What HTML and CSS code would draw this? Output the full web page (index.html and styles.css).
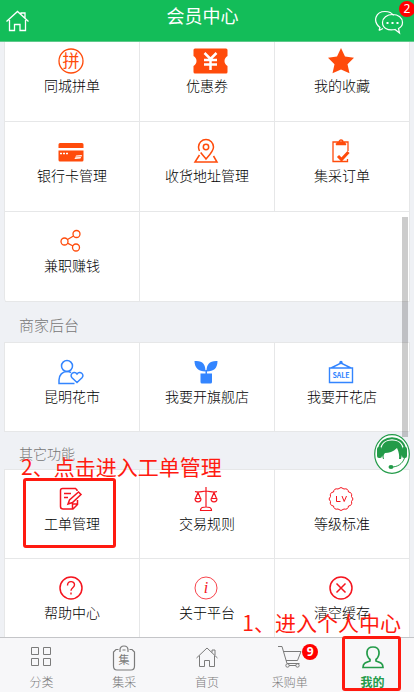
FILE: index.html
```html
<!DOCTYPE html>
<html lang="zh-CN">
<head>
<meta charset="utf-8">
<meta name="viewport" content="width=device-width, initial-scale=1">
<title>会员中心</title>
<link rel="stylesheet" href="styles.css">
</head>
<body>
<header class="topbar">
  <a class="topbar-home" href="#" aria-label="首页">
    <svg width="24" height="22" viewBox="0 0 24 22" fill="none" stroke="currentColor" stroke-width="1.300"><path d="M1.500 11.500 12.500 1.500l11 10M4.500 10v10.500h5v-6h5.500v6h5.500V10M16 4.500V3h4v5"/></svg>
  </a>
  <h1>会员中心</h1>
  <a class="topbar-chat" href="#" aria-label="消息">
    <svg width="30" height="25" viewBox="0 0 30 25" fill="none" stroke="currentColor" stroke-width="1.200"><path d="M5 20.500 6 17.500C-2 11 2 1.500 11 1.500c4 0 7 1.500 8.500 4M5 20.500l4-2"/><path d="M18.500 4.500c6 0 10 3.500 10 8 0 2.500-1.500 4.800-4 6l1 4.500-4.500-3.500C13 21 8.500 17.500 8.500 12.500c0-4.500 4.500-8 10-8z"/><path d="M12.500 13h2m3 0h2m3 0h2" stroke-width="2"/></svg>
    <span class="badge">2</span>
  </a>
</header>

<main class="content">
  <section class="card card-first">
    <a class="cell" href="#"><svg class="icon" viewBox="0 0 26 26" fill="none" stroke="currentColor"><circle cx="13" cy="13" r="12" stroke-width="1.300"/><text class="glyph medium" x="13" y="19" font-size="17">拼</text></svg><span>同城拼单</span></a>
    <a class="cell" href="#"><svg class="icon icon-wide" viewBox="0 0 36 26" fill="currentColor"><path d="M5 .5h29q1.500 0 1.500 1.500v6c-4 2.500-4 7.500 0 10v6q0 1.500-1.500 1.500H3Q1.500 25.500 1.500 24v-6c4-2.500 4-7.500 0-10V2Q1.500.5 3 .5z"/><path d="m12.500 5 6 6 6-6M12 12h13M12 16.500h13M18.500 11v11" fill="none" stroke="#fff" stroke-width="2.500"/></svg><span>优惠券</span></a>
    <a class="cell" href="#"><svg class="icon" viewBox="0 0 26 26" fill="currentColor"><path d="m13 0 4 8.500 9 1.300-6.500 6.400 2 9L13 21.500l-8.500 3.700 2-9L0 9.800l9-1.300z"/></svg><span>我的收藏</span></a>
    <a class="cell" href="#"><svg class="icon" viewBox="0 0 26 26" fill="currentColor"><path d="M2 5h22q1.500 0 1.500 1.500V10H.5V6.500Q.5 5 2 5zM.5 12.500h25V22q0 1.500-1.500 1.500H2Q.5 23.500.5 22z"/><path d="M2 15.500h2m1 0h2m1 0h2" stroke="#fff" stroke-width="1.500"/><path d="m18 17.500 6-.5-1.500 3.500-6 .5z" fill="#fff"/><path d="m17 19 6-.5" stroke="#ff4b0b" stroke-width=".6"/></svg><span>银行卡管理</span></a>
    <a class="cell" href="#"><svg class="icon" viewBox="0 0 26 26" fill="none" stroke="currentColor" stroke-width="1.500"><path d="M6.500 13C5.800 11.500 5.500 10 5.500 9a7.500 7.500 0 0 1 15 0c0 4-3.500 7.500-7.500 12-2-2.500-4-4.500-5.300-6.500M6.500 17 2 24h22l-3.500-6"/><circle cx="13" cy="9" r="2.700"/></svg><span>收货地址管理</span></a>
    <a class="cell" href="#"><svg class="icon" viewBox="0 0 26 26" fill="none" stroke="currentColor" stroke-width="1.300"><path d="M19.500 21v2.500H5V4h15v9M8 6.500h10M9 5.500 11 4a2 2 0 0 1 4 0l2 1.500z"/><path d="m10 18 3.500 3.500 7-7.500" stroke-width="3"/></svg><span>集采订单</span></a>
    <a class="cell" href="#"><svg class="icon" viewBox="0 0 26 26" fill="none" stroke="currentColor" stroke-width="1.300"><circle cx="6.500" cy="13.500" r="3.500"/><circle cx="18.500" cy="6" r="3.500"/><circle cx="18" cy="19.500" r="3.500"/><path d="m9.500 11.500 6-3.500M9.500 15.200l5.500 2.800"/></svg><span>兼职赚钱</span></a>
    <div class="cell cell-empty"></div>
  </section>

  <h2>商家后台</h2>
  <section class="card card-blue">
    <a class="cell" href="#"><svg class="icon" viewBox="0 0 26 26" fill="none" stroke="currentColor" stroke-width="1.500"><circle cx="9" cy="7" r="5.500"/><path d="M16.500 24.500H1V21c0-5 3.500-8.500 8-8.500 1.500 0 3 .4 4 1.200M19 23.500l-5-4.800c-3-3.200 2-7.500 5-3.700 3-3.800 8 .5 5 3.700z"/></svg><span>昆明花市</span></a>
    <a class="cell" href="#"><svg class="icon" viewBox="0 0 26 26" fill="currentColor"><path d="M1.500 2c8-.8 11 3 11 10.500-7 0-11-4-11-10.500zM24.500 2c0 7-3.500 10.500-11 10.500 0-7 3-11 11-10.500zM7.500 14.500h5V11H14v3.500h5V23q0 1.500-1.500 1.500H9Q7.500 24.500 7.500 23z"/></svg><span>我要开旗舰店</span></a>
    <a class="cell" href="#"><svg class="icon" viewBox="0 0 26 26" fill="none" stroke="currentColor" stroke-width="1.400"><path d="M1.500 9h23v14.500h-23zM3 9l10-5 10 5"/><circle cx="13" cy="3.500" r="1" fill="currentColor"/><text class="glyph bold" x="13" y="19" font-size="7">SALE</text></svg><span>我要开花店</span></a>
  </section>

  <h2 class="compact">其它功能</h2>
  <section class="card card-red">
    <a class="cell" href="#"><svg class="icon" viewBox="0 0 26 26" fill="none" stroke="currentColor" stroke-width="1.500"><path d="M19 5V4l-1.500-1.500H4.500Q2.500 2.500 2.500 4.500v16q0 2.500 2.500 2.500H15l4.500-4.500V14M14.500 22.500V18h4.500M6 7.500h7M6 11.500h4M10 18l1.500-4L20.500 6l2.500 2.500-8.500 8z"/></svg><span>工单管理</span></a>
    <a class="cell" href="#"><svg class="icon" viewBox="0 0 26 26" fill="none" stroke="currentColor" stroke-width="1.200"><path d="M13 1v20M2 5.500c4 1.500 7-.5 11-.5s7 2 11 .5M5 6.500l-2.500 6h5zM21 6.500l-2.500 6h5zM2 12.500c0 4.500 6 4.500 6 0M18 12.500c0 4.500 6 4.500 6 0M7.500 24.500c0-3.500 2.500-3.500 5.500-3.500s5.500 0 5.500 3.500z"/></svg><span>交易规则</span></a>
    <a class="cell" href="#"><svg class="icon" viewBox="0 0 26 26" fill="none" stroke="currentColor"><path d="M10 3q3-3 6 0 4-1 4.500 3 4 .5 3 4.500 3 2.500 0 5 1 4-3 4.500-.5 4-4.500 3-3 3-6 0-4 1-4.500-3-4-.5-3-4.500-3-2.500 0-5-1-4 3-4.500.5-4 4.500-3z"/><path d="M8.500 10v5.500h4M14 10l2.200 5.500L18.500 10"/></svg><span>等级标准</span></a>
    <a class="cell" href="#"><svg class="icon" viewBox="0 0 26 26" fill="none" stroke="currentColor"><circle cx="13" cy="13" r="11" stroke-width="1.500"/><path d="M9.500 10.500c0-5 7-5 7-.7 0 3-3.500 3-3.500 6M13 17.500v2" stroke-width="1.400"/></svg><span>帮助中心</span></a>
    <a class="cell" href="#"><svg class="icon" viewBox="0 0 26 26" fill="none" stroke="currentColor" stroke-width=".8"><circle cx="13" cy="13" r="11"/><text class="glyph serif" x="13" y="18" font-size="16">i</text></svg><span>关于平台</span></a>
    <a class="cell" href="#"><svg class="icon" viewBox="0 0 26 26" fill="none" stroke="currentColor" stroke-width="1.500"><circle cx="13" cy="13" r="11"/><path d="m8.500 8.500 9 9m0-9-9 9"/></svg><span>清空缓存</span></a>
  </section>
  <div class="scrollbar"></div>
</main>

<nav class="tabs">
  <a class="tab" href="#"><svg class="tab-icon" viewBox="0 0 26 26" fill="none" stroke="currentColor"><path d="M3.500 2.500h7v7h-7zM15.500 2.500h7v7h-7zM3.500 13.500h7v7h-7zM15.500 13.500h7v7h-7z"/></svg><span>分类</span></a>
  <a class="tab" href="#"><svg class="tab-icon" viewBox="0 0 26 26" fill="none" stroke="currentColor" stroke-width="1.200"><path d="M7.500 4.500H5L2.500 7v14Q2.500 25 6 25h14q3.500 0 3.500-4V7L21 4.500h-2.500M9 7V5q0-4 4-4t4 4v2M11.500 5h3"/><text class="glyph medium" x="13" y="19" font-size="11">集</text></svg><span>集采</span></a>
  <a class="tab" href="#"><svg class="tab-icon" viewBox="0 0 26 26" fill="none" stroke="currentColor"><path d="M2.500 13 13 3l10.500 10M5.500 10.500v11h5v-6h5v6h5v-11M18 7.500V5h3v5"/></svg><span>首页</span></a>
  <a class="tab" href="#"><svg class="tab-icon" viewBox="0 0 26 26" fill="none" stroke="currentColor"><path d="M1 1.500h4l5 17h12.500M6.500 6.500H24l-3.500 9H9"/><circle cx="10.500" cy="20.500" r="1.700"/><circle cx="20.500" cy="20.500" r="1.700"/><path d="M12 20.500h7"/></svg><span>采购单</span><b class="badge badge-tab">9</b></a>
  <a class="tab active" href="#"><svg class="tab-icon" viewBox="0 0 26 26" fill="none" stroke="currentColor" stroke-width="1.700"><path d="M13 2c-8 0-7 9-3 12.500V16c-4 1.500-7 2-7 6.500h20c0-4.500-3-5-7-6.500v-1.500C20 11 21 2 13 2z"/></svg><span>我的</span></a>
</nav>

<a class="service" href="#" aria-label="客服">
  <svg width="36" height="40" viewBox="0 0 36 40"><ellipse cx="18" cy="20" rx="17.300" ry="19.300" fill="#fff" stroke="#239b49" stroke-width="1.200"/><path d="M5 15C7 .5 29 .5 31 15" fill="none" stroke="#239b49" stroke-width="2"/><path d="M9 25C5 12 9 6.500 18 6.500S31 12 27 25h-2c.5-3 0-7-2-11-4 4-8 5-12 5-2 2-1.500 4-1 6z" fill="#239b49"/><rect x="3" y="13" width="5" height="11" rx="2" fill="#239b49"/><rect x="28" y="13" width="5" height="11" rx="2" fill="#239b49"/><path d="M30.500 24c-2 6-7 9-13 9" fill="none" stroke="#239b49"/><ellipse cx="17" cy="33" rx="2.500" ry="2" fill="#239b49"/></svg>
</a>
<div class="mark mark-work"></div>
<div class="mark mark-mine"></div>
<p class="note note-work">2、点击进入工单管理</p>
<p class="note note-mine">1、进入个人中心</p>
</body>
</html>
```
FILE: styles.css
```css
* { box-sizing: border-box; }
body {
  margin: 0;
  height: 100vh;
  display: flex;
  flex-direction: column;
  position: relative;
  overflow: hidden;
  background: #eff1f5;
  color: #000;
  font: 14px/20px "Noto Sans CJK SC", sans-serif;
  font-weight: 300;
}
a { color: inherit; text-decoration: none; }
svg { display: block; }

.topbar {
  flex: none;
  height: 42px;
  padding: 0 10px 0 5px;
  display: grid;
  grid-template-columns: 1fr auto 1fr;
  background: #13bd59;
  border-bottom: 1px solid #5fc98b;
  color: #fff;
}
.topbar h1 { margin: 0; padding-right: 4px; font-size: 18px; line-height: 30px; font-weight: 400; }
.topbar-home { padding-top: 10px; }
.topbar-chat { padding-top: 10px; justify-self: end; position: relative; }
.badge {
  position: absolute;
  top: 1px;
  right: -11px;
  width: 16px;
  height: 16px;
  border-radius: 50%;
  background: #f00;
  color: #fff;
  font: 12px/16px "Noto Sans", sans-serif;
  text-align: center;
}

.content { flex: 1; min-height: 0; overflow: hidden; position: relative; }
.card {
  margin: 0 4px;
  display: grid;
  grid-template-columns: repeat(3, 1fr);
  grid-auto-rows: 89px;
  background: #fff;
  border: 1px solid #e6e7e8;
  border-width: 1px 0 0 1px;
}
.card-first { margin-top: -11px; grid-auto-rows: 90px; color: #ff4b0b; border-radius: 4px; }
.card-blue { color: #3385ff; }
.card-red { color: #f5141e; }
.cell {
  display: flex;
  flex-direction: column;
  align-items: center;
  padding-top: 16px;
  border: 1px solid #e6e7e8;
  border-width: 0 1px 1px 0;
}
.cell span { color: #000; margin-top: 1px; white-space: nowrap; }
.cell-empty { grid-column: span 2; }
.icon { width: 26px; height: 26px; margin-right: 2px; }
.icon-wide { width: 36px; margin-right: 0; margin-left: 6px; }
.glyph { fill: currentColor; stroke: none; text-anchor: middle; }
.medium { font-weight: 400; }
.bold { font-weight: 700; }
.serif { font-family: "Liberation Serif", serif; font-style: italic; }

h2 {
  margin: 0;
  padding: 3px 19px 0;
  height: 40px;
  font-size: 15px;
  line-height: 40px;
  font-weight: 300;
  color: #777;
}
h2.compact { height: 37px; padding-top: 1px; font-size: 14px; }

.scrollbar {
  position: absolute;
  top: 175px;
  right: 6px;
  width: 6px;
  height: 220px;
  background: rgba(0, 0, 0, .2);
}

.tabs {
  flex: none;
  height: 55px;
  display: grid;
  grid-template-columns: repeat(5, 1fr);
  background: #f7f7f9;
  border-top: 1px solid #c4c5c8;
  color: #7b7b7b;
}
.tab {
  display: flex;
  flex-direction: column;
  align-items: center;
  padding-top: 7px;
  font-size: 12px;
  position: relative;
}
.tab span { margin-top: 1px; }
.tab.active { color: #239b49; font-weight: 700; }
.tab-icon { width: 26px; height: 26px; }
.badge-tab { top: 6px; right: 13px; font-weight: 700; }

.service { position: absolute; right: 4px; top: 434px; }
.mark { position: absolute; border: 3px solid #ff1a10; border-radius: 3px; }
.mark-work { left: 23px; top: 478px; width: 93px; height: 70px; }
.mark-mine { right: 13px; bottom: 1px; width: 59px; height: 55px; }
.note {
  position: absolute;
  margin: 0;
  font-size: 21px;
  line-height: 28px;
  font-weight: 400;
  color: #ff1a10;
  white-space: nowrap;
}
.note-work { left: 21px; top: 452px; }
.note-mine { right: 13px; top: 608px; }
```
